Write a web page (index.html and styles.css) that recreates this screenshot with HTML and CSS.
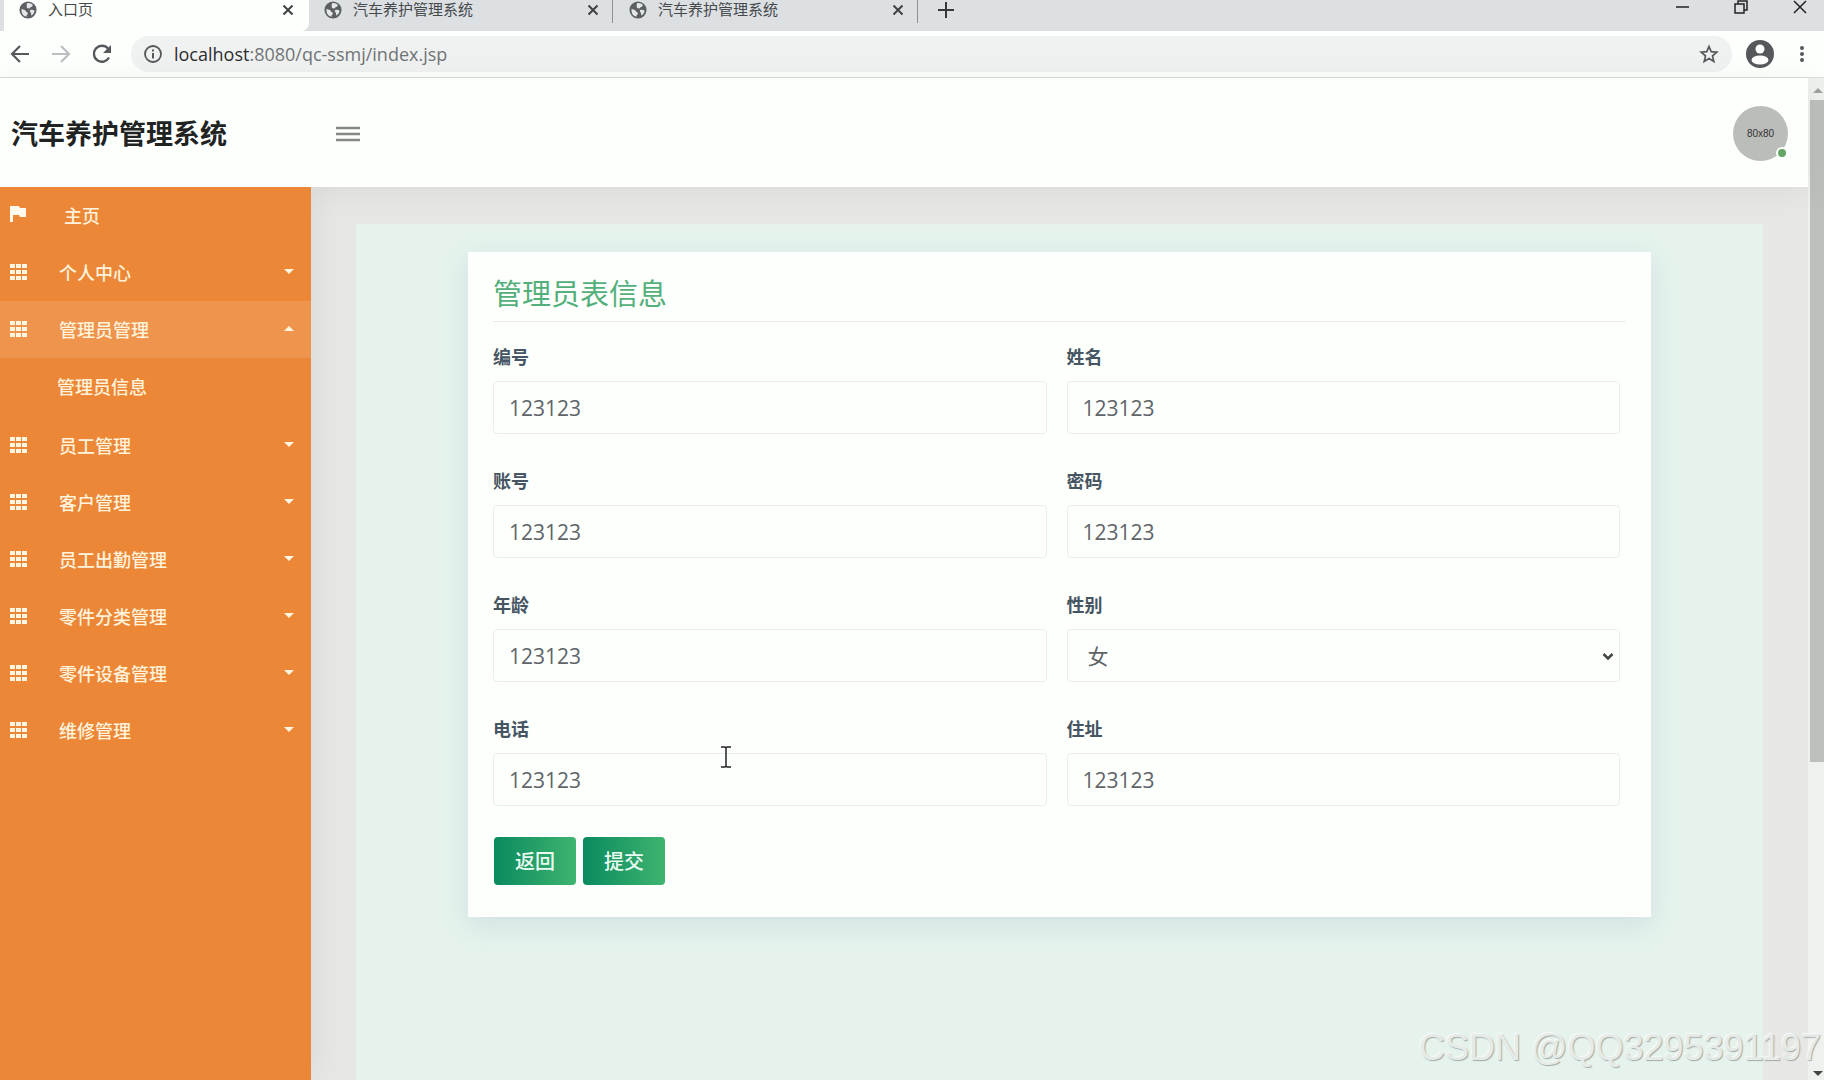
FILE: index.html
```html
<!DOCTYPE html>
<html lang="zh-CN">
<head>
<meta charset="utf-8">
<title>入口页</title>
<link rel="stylesheet" href="styles.css">
</head>
<body>
<svg class="defs" aria-hidden="true">
  <symbol id="globe" viewBox="0 0 20 20"><circle cx="10" cy="10" r="9.5" fill="#5c6063"/><path d="M3 8.500c2 1.500 4 .8 4.500 2.500s2.500 1 2.300 3-1.800 1.500-1.600 3.400C4.500 16.500 2 13 3 8.500zM9.500 2.200c2.500-.3 4.500.6 6 2.300-.8.8-.5 2-2 2.200s-1 1.800-2.500 1.600-2.600-.6-2.400-2.200S8 3.500 9.500 2.200zM12.500 10c1.500-.8 3.300-.4 4.800.8-.2 2.400-1.600 4.300-3.600 5.400-.4-1.300.2-2-.6-3.200s-1.600-2-.6-3z" fill="#e4e7e9"/></symbol>
  <symbol id="close" viewBox="0 0 12 12"><path d="M1.500 1.500l9 9M10.500 1.500l-9 9" stroke="#3f4244" stroke-width="2" fill="none"/></symbol>
  <symbol id="grid" viewBox="0 0 18 16"><path d="M0 0h5v4H0zM6 0h5v4H6zM12 0h5v4h-5zM0 6h5v4H0zM6 6h5v4H6zM12 6h5v4h-5zM0 12h5v4H0zM6 12h5v4H6zM12 12h5v4h-5z" fill="#fff6e2"/></symbol>
  <symbol id="caret" viewBox="0 0 10 5"><path d="M0 0h10L5 5z" fill="#fff6e2"/></symbol>
</svg>

<header class="browser">
  <div class="tabs">
    <div class="tab tab-active"><svg class="favicon"><use href="#globe"/></svg><span class="tab-title">入口页</span><button class="plain" aria-label="关闭"><svg class="x"><use href="#close"/></svg></button></div>
    <div class="tab"><svg class="favicon"><use href="#globe"/></svg><span class="tab-title">汽车养护管理系统</span><button class="plain" aria-label="关闭"><svg class="x"><use href="#close"/></svg></button></div>
    <div class="tab"><svg class="favicon"><use href="#globe"/></svg><span class="tab-title">汽车养护管理系统</span><button class="plain" aria-label="关闭"><svg class="x"><use href="#close"/></svg></button></div>
    <button class="plain new-tab" aria-label="新标签页"><svg width="16" height="16"><path d="M8 0v16M0 8h16" stroke="#36393b" stroke-width="2"/></svg></button>
    <div class="window-buttons">
      <button class="plain" aria-label="最小化"><svg width="14" height="14"><path d="M1 7h13" stroke="#222" stroke-width="1.500"/></svg></button>
      <button class="plain" aria-label="还原"><svg width="14" height="14"><path d="M1 4h9v9H1zM4 4V1h9v9h-3" fill="none" stroke="#222" stroke-width="1.500"/></svg></button>
      <button class="plain" aria-label="关闭窗口"><svg width="14" height="14"><path d="M1 1l12 12M13 1L1 13" stroke="#222" stroke-width="1.500"/></svg></button>
    </div>
  </div>
  <div class="toolbar">
    <button class="plain" aria-label="后退"><svg width="20" height="20"><path d="M19 10H2M10 2l-8 8 8 8" fill="none" stroke="#55595c" stroke-width="2.200"/></svg></button>
    <button class="plain" aria-label="前进"><svg width="20" height="20"><path d="M1 10h17M10 2l8 8-8 8" fill="none" stroke="#bbbfc1" stroke-width="2.200"/></svg></button>
    <button class="plain" aria-label="刷新"><svg width="20" height="20"><path d="M17 13.500A8 8 0 1 1 16 4.500" fill="none" stroke="#55595c" stroke-width="2.300"/><path d="M19 1v8h-8z" fill="#55595c"/></svg></button>
    <div class="address">
      <svg width="20" height="20"><circle cx="10" cy="10" r="8" fill="none" stroke="#55595c" stroke-width="1.800"/><path d="M10 9v5.500M10 5.500v2" stroke="#55595c" stroke-width="2"/></svg>
      <div class="url"><span class="host">localhost</span>:8080/qc-ssmj/index.jsp</div>
      <button class="plain" aria-label="收藏"><svg width="20" height="20"><path d="M10 2.500l2.200 5.200 5.600.5-4.300 3.700 1.300 5.500-4.800-2.900-4.800 2.900 1.300-5.500-4.300-3.700 5.600-.5z" fill="none" stroke="#55595c" stroke-width="1.700"/></svg></button>
    </div>
    <button class="plain" aria-label="用户"><svg width="28" height="28"><circle cx="14" cy="14" r="14" fill="#55595c"/><circle cx="14" cy="9" r="4.500" fill="#fff"/><ellipse cx="14" cy="20" rx="8.500" ry="4.500" fill="#fff"/></svg></button>
    <button class="plain" aria-label="菜单"><svg width="6" height="18"><circle cx="3" cy="3" r="2" fill="#55595c"/><circle cx="3" cy="9" r="2" fill="#55595c"/><circle cx="3" cy="15" r="2" fill="#55595c"/></svg></button>
  </div>
</header>

<div class="viewport">
  <div class="page">
    <header class="site-header">
      <h1 class="brand">汽车养护管理系统</h1>
      <button class="plain" aria-label="切换菜单"><svg width="24" height="18"><path d="M0 3h24M0 9h24M0 15h24" stroke="#858785" stroke-width="2.500"/></svg></button>
      <div class="avatar">80x80<span class="status"></span></div>
    </header>
    <div class="body">
      <nav class="sidebar">
        <a class="item home" href="#"><svg width="18" height="18"><path d="M0 0h9l1 2h6v9h-6l-1-2H3v7H0z" fill="#fff9ee"/></svg><span>主页</span></a>
        <a class="item" href="#"><svg class="gridicon"><use href="#grid"/></svg><span>个人中心</span><svg class="caret"><use href="#caret"/></svg></a>
        <a class="item open" href="#"><svg class="gridicon"><use href="#grid"/></svg><span>管理员管理</span><svg class="caret"><use href="#caret"/></svg></a>
        <div class="submenu"><a class="item" href="#">管理员信息</a></div>
        <a class="item" href="#"><svg class="gridicon"><use href="#grid"/></svg><span>员工管理</span><svg class="caret"><use href="#caret"/></svg></a>
        <a class="item" href="#"><svg class="gridicon"><use href="#grid"/></svg><span>客户管理</span><svg class="caret"><use href="#caret"/></svg></a>
        <a class="item" href="#"><svg class="gridicon"><use href="#grid"/></svg><span>员工出勤管理</span><svg class="caret"><use href="#caret"/></svg></a>
        <a class="item" href="#"><svg class="gridicon"><use href="#grid"/></svg><span>零件分类管理</span><svg class="caret"><use href="#caret"/></svg></a>
        <a class="item" href="#"><svg class="gridicon"><use href="#grid"/></svg><span>零件设备管理</span><svg class="caret"><use href="#caret"/></svg></a>
        <a class="item" href="#"><svg class="gridicon"><use href="#grid"/></svg><span>维修管理</span><svg class="caret"><use href="#caret"/></svg></a>
      </nav>
      <main class="content">
        <div class="panel">
          <form class="card">
            <h2 class="card-title">管理员表信息</h2>
            <div class="fields">
              <div class="field"><label for="no">编号</label><input id="no" type="text" value="123123"></div>
              <div class="field"><label for="name">姓名</label><input id="name" type="text" value="123123"></div>
              <div class="field"><label for="account">账号</label><input id="account" type="text" value="123123"></div>
              <div class="field"><label for="pass">密码</label><input id="pass" type="text" value="123123"></div>
              <div class="field"><label for="age">年龄</label><input id="age" type="text" value="123123"></div>
              <div class="field"><label for="sex">性别</label><div class="select"><select id="sex"><option>女</option><option>男</option></select><svg class="chevron"><path d="M1.500 2l4.500 4.500L10.500 2" fill="none" stroke="#444" stroke-width="2.500"/></svg></div></div>
              <div class="field"><label for="phone">电话</label><input id="phone" type="text" value="123123"></div>
              <div class="field"><label for="address">住址</label><input id="address" type="text" value="123123"></div>
            </div>
            <div class="actions"><button class="btn" type="button">返回</button><button class="btn" type="button">提交</button></div>
          </form>
        </div>
      </main>
    </div>
  </div>
  <div class="scrollbar" aria-hidden="true">
    <div class="arrow arrow-up"><svg width="10" height="5"><path d="M0 5h10L5 0z" fill="#a0a29f"/></svg></div>
    <div class="thumb"></div>
    <div class="rest"></div>
    <div class="arrow arrow-down"><svg width="10" height="5"><path d="M0 0h10L5 5z" fill="#444"/></svg></div>
  </div>
</div>
<svg class="cursor" width="10" height="22" aria-hidden="true"><path d="M0 1h4l1 1 1-1h4M5 2v18M0 21h4l1-1 1 1h4" fill="none" stroke="#222" stroke-width="1.500"/></svg>
<div class="watermark">CSDN @QQ3295391197</div>
</body>
</html>
```
FILE: styles.css
```css
* { box-sizing: border-box; }
body {
  margin: 0;
  height: 100vh;
  display: flex;
  flex-direction: column;
  overflow: hidden;
  background: #fdfffd;
  font-family: "Open Sans", "Noto Sans CJK SC", sans-serif;
}
svg { display: block; flex: none; }
.defs { position: absolute; width: 0; height: 0; }
.plain { border: 0; padding: 0; background: none; }

/* browser frame */
.tabs { display: flex; height: 31px; padding-left: 4px; background: #dce0e3; }
.tab {
  display: flex;
  align-items: center;
  width: 305px;
  padding: 0 14px 12px 15px;
  border-right: 1px solid transparent;
  font-size: 15px;
  line-height: 19px;
  color: #45494c;
}
.tab + .tab { background: linear-gradient(#8d9194, #8d9194) right top / 1px 23px no-repeat; }
.tab-active { background: #fdfffd; border-radius: 0 0 8px 0; }
.favicon { width: 18px; height: 18px; margin-right: 11px; }
.tab-title { flex: 1; }
.x { width: 12px; height: 12px; }
.new-tab { padding: 2px 19px 14px; }
.window-buttons { display: flex; gap: 45px; margin-left: auto; padding: 0 17px 18px 0; }
.toolbar {
  display: flex;
  align-items: center;
  gap: 21px;
  height: 47px;
  padding: 0 19px 0 10px;
  border-bottom: 1px solid #d9dcdb;
}
.address {
  flex: 1;
  display: flex;
  align-items: center;
  gap: 11px;
  height: 36px;
  margin-left: -2px;
  margin-right: -7px;
  padding: 0 13px 0 12px;
  border-radius: 18px;
  background: #f0f2f1;
}
.address ~ .plain { margin-right: 4px; }
.address ~ .plain:last-child { margin-right: 0; }
.url { flex: 1; font-size: 18px; line-height: 24px; color: #707476; }
.host { color: #2b2e30; }

/* page */
.viewport { flex: 1; display: flex; min-height: 0; }
.page { flex: 1; display: flex; flex-direction: column; min-width: 0; }
.site-header {
  position: relative;
  z-index: 1;
  display: flex;
  align-items: center;
  height: 109px;
  padding: 2px 20px 0 11px;
  background: #fdfffd;
  box-shadow: 0 4px 36px rgba(0, 0, 0, .06);
}
.brand { width: 325px; margin: 0; font-size: 27px; line-height: 40px; font-weight: 700; color: #212322; }
.avatar {
  position: relative;
  width: 55px;
  margin-left: auto;
  border-radius: 50%;
  background: #bbbdba;
  font: 10px/55px "Liberation Sans", sans-serif;
  text-align: center;
  color: #333;
}
.status {
  position: absolute;
  right: 0;
  bottom: 2px;
  width: 12px;
  height: 12px;
  border: 2px solid #fdfffd;
  border-radius: 50%;
  background: #64a566;
}
.body { flex: 1; display: flex; min-height: 0; }
.sidebar {
  position: relative;
  z-index: 2;
  flex: none;
  width: 311px;
  background: #ec8737;
  box-shadow: 4px 0 36px rgba(0, 0, 0, .06);
  clip-path: inset(0 -50px 0 0);
}
.item {
  display: flex;
  align-items: center;
  height: 57px;
  padding: 0 17px 0 10px;
  font-size: 18px;
  line-height: 27px;
  font-weight: 500;
  color: #fff3dc;
  text-decoration: none;
}
.item span { flex: 1; margin-left: 31px; padding-top: 2px; }
.home span { margin-left: 36px; }
.home svg { margin-bottom: 2px; }
.gridicon { width: 18px; height: 16px; margin-bottom: 2px; }
.caret { width: 10px; height: 5px; margin-bottom: 2px; }
.open { background: #ef944d; }
.open .caret { transform: rotate(180deg); }
.submenu { padding: 1px 0; }
.submenu .item { padding-left: 57px; }
.content { flex: 1; display: flex; padding: 37px 45px 0; background: #e7e8e6; }
.panel { flex: 1; padding: 28px 112px 0; background: #e5f3ec; }
.card {
  padding: 22px 25px 32px;
  background: #fdfffd;
  box-shadow: 0 8px 24px rgba(140, 160, 200, .22);
}
.card-title {
  margin: 0;
  padding-bottom: 7px;
  border-bottom: 1px solid #e9ebea;
  font-size: 29px;
  line-height: 40px;
  font-weight: 400;
  color: #54b07b;
}
.fields { display: grid; grid-template-columns: 1fr 1fr; gap: 32px 20px; margin: 20px 6px 0 0; }
.field { display: flex; flex-direction: column; gap: 9px; }
.field label { font-size: 18px; line-height: 30px; height: 30px; font-weight: 700; color: #465562; }
.field input, .field select {
  width: 100%;
  height: 53px;
  margin: 0;
  padding: 0 15px;
  border: 1px solid #eceeed;
  border-radius: 4px;
  background: #fdfffd;
  font: 21px/30px "Open Sans", "Noto Sans CJK SC", sans-serif;
  color: #5f6468;
}
.field select { appearance: none; padding-left: 20px; }
.select { position: relative; }
.chevron { position: absolute; right: 6px; top: 23px; width: 12px; height: 9px; pointer-events: none; }
.actions { display: flex; gap: 7px; padding: 31px 0 0 1px; }
.btn {
  width: 82px;
  height: 48px;
  padding: 0;
  border: 0;
  border-radius: 4px;
  background: linear-gradient(90deg, #0a8a5f, #3fb470);
  font: 500 20px/30px "Noto Sans CJK SC", sans-serif;
  color: #e9fbf0;
}

.scrollbar { display: flex; flex-direction: column; width: 16px; padding-left: 2px; background: #eff1ef; }
.arrow { padding-left: 3px; }
.arrow-up { height: 22px; padding-top: 10px; }
.arrow-down { height: 16px; padding-top: 7px; }
.thumb { flex: 662; background: #bdbfbc; }
.rest { flex: 302; }

.cursor { position: absolute; left: 721px; top: 746px; }
.watermark {
  position: absolute;
  right: 3px;
  bottom: 12px;
  font: 36px/40px "Liberation Sans", sans-serif;
  color: #e6ebe8;
  text-shadow: 1px 1px 1px #a3aaa6, -1px -1px 1px #f6faf8;
}
```
